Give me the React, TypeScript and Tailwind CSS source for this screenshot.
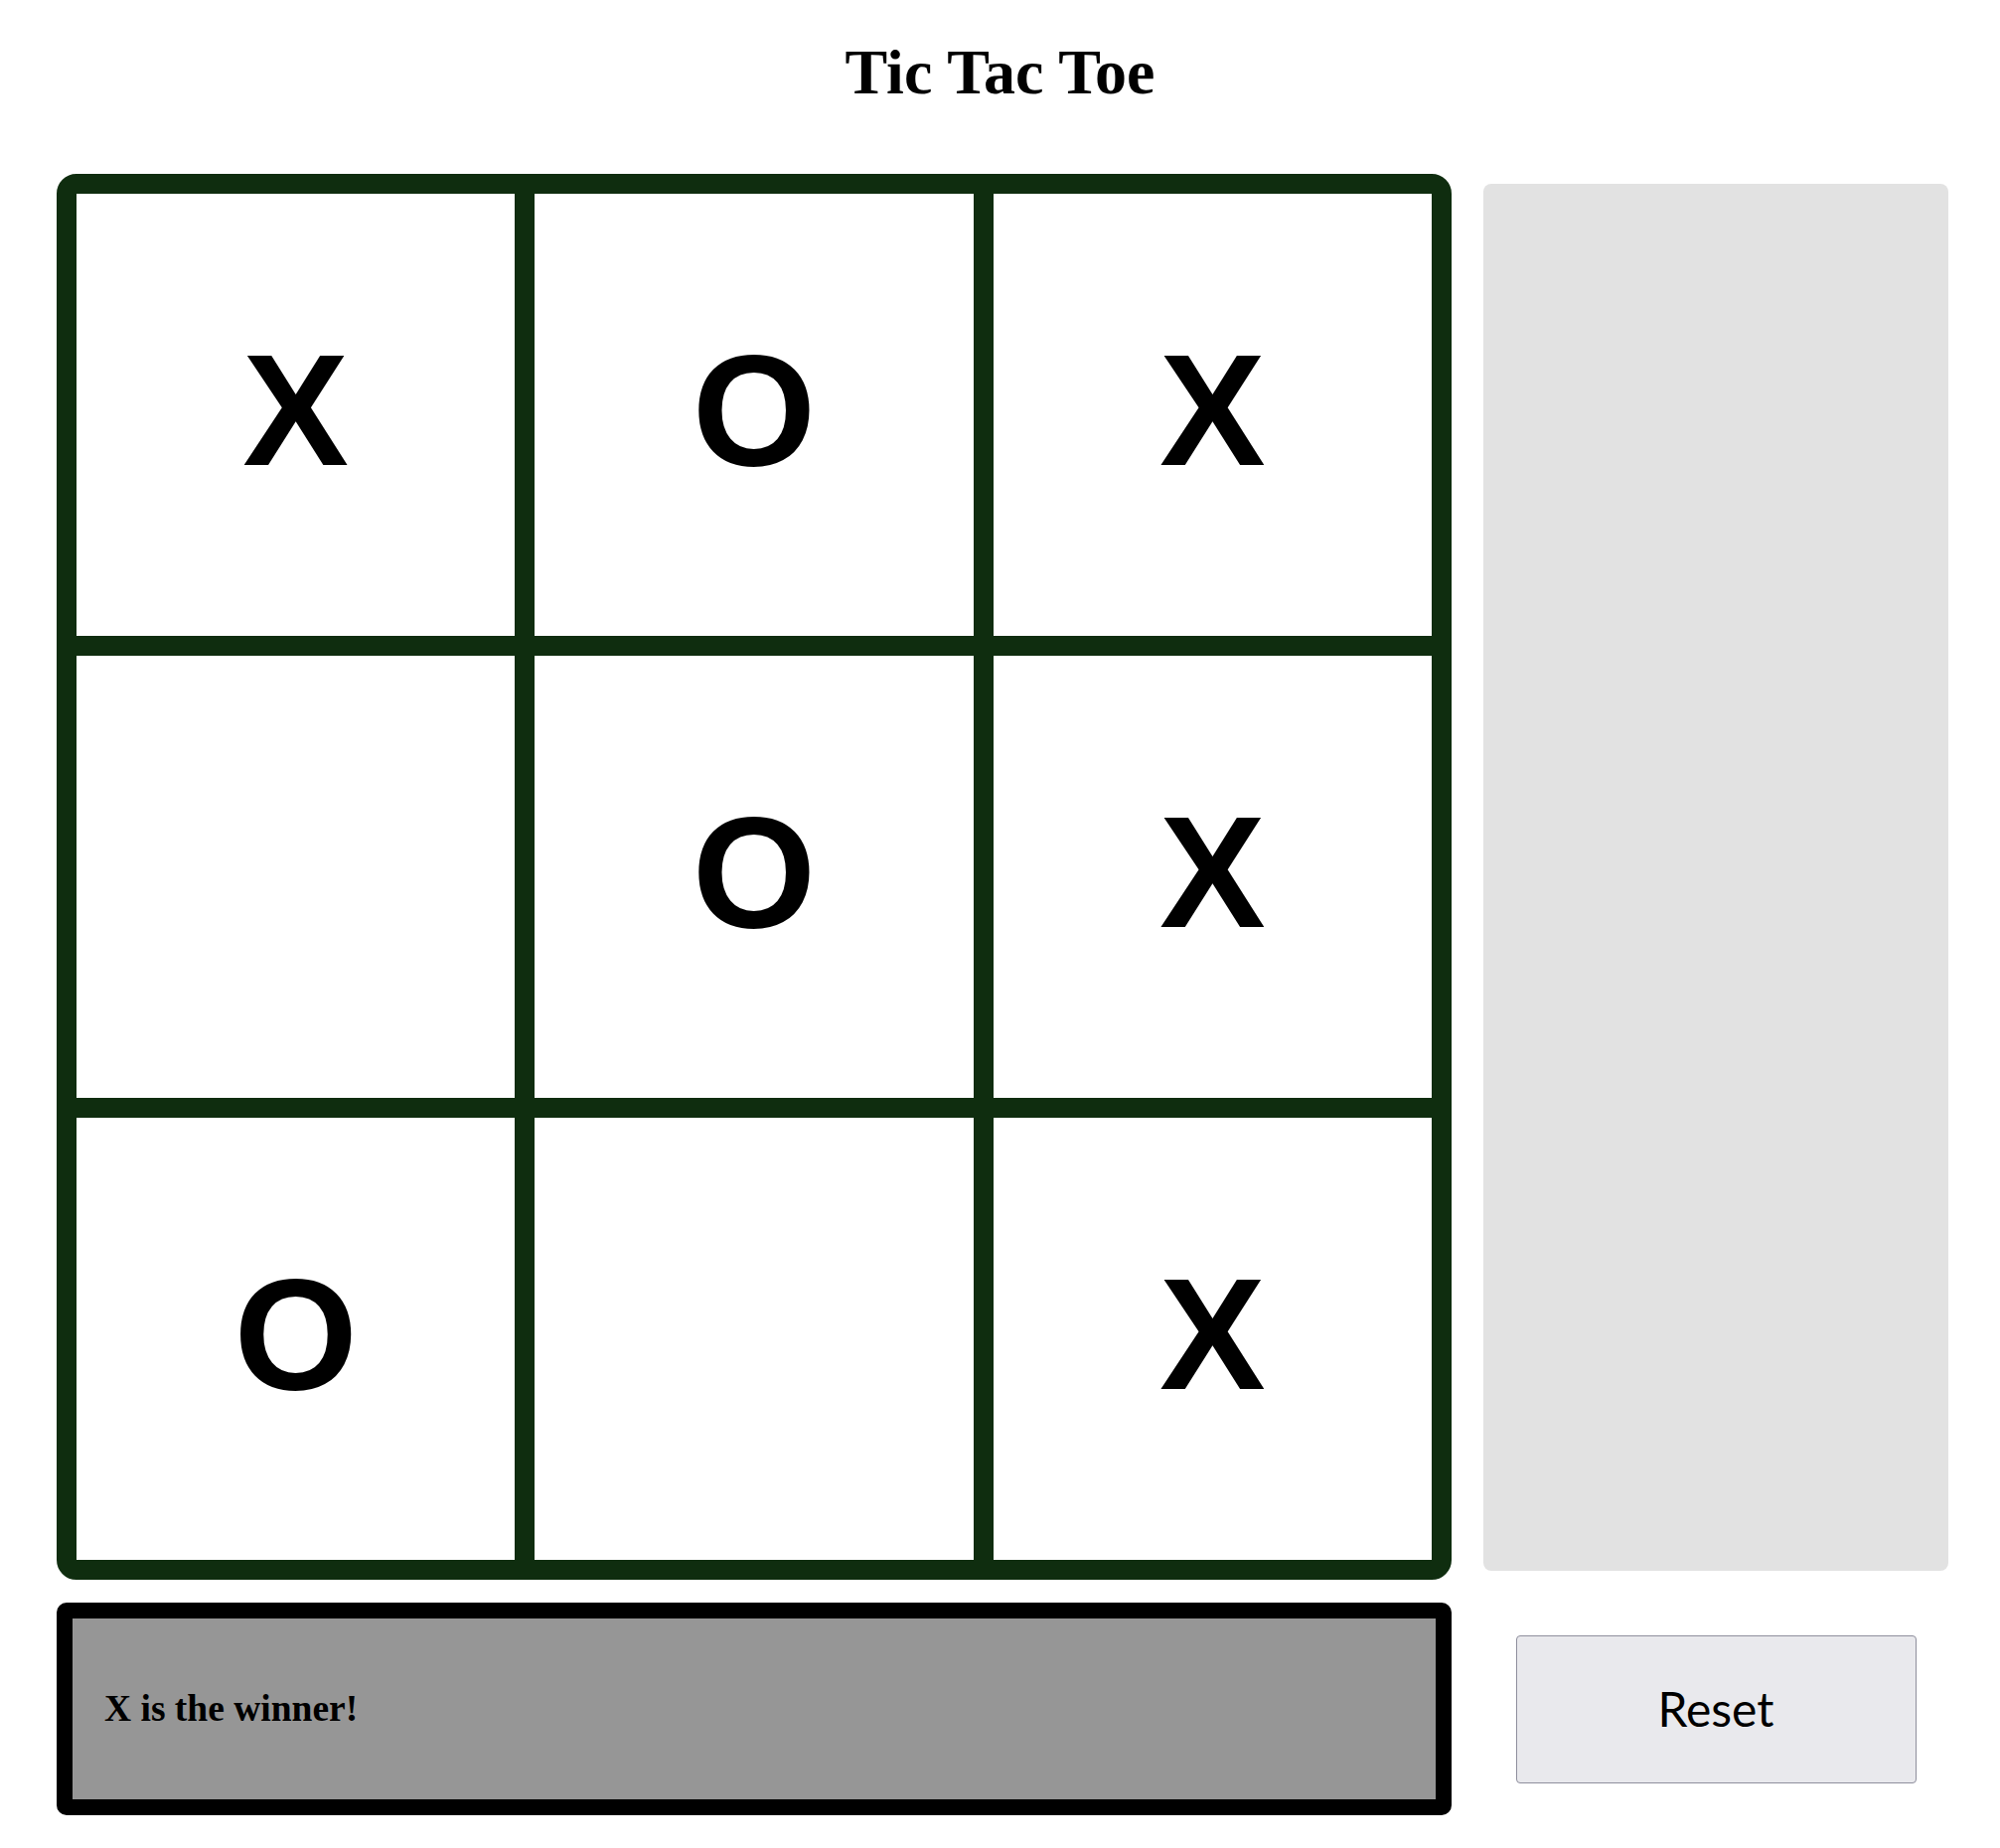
import { useState } from "react";

type Mark = "X" | "O" | null;

const initialBoard: Mark[] = ["X", "O", "X", null, "O", "X", "O", null, "X"];

function Cell({ value }: { value: Mark }) {
	return (
		<div className="h-[445px] bg-white flex items-center justify-center pb-[9px]">
			<span className="font-['Liberation_Sans',Arial,sans-serif] font-bold text-[160px] leading-none text-black select-none">
				{value}
			</span>
		</div>
	);
}

export default function App() {
	const [board, setBoard] = useState<Mark[]>(initialBoard);

	return (
		<div className="min-h-screen bg-white">
			<h1 className="mt-0 pt-[36px] mb-[65px] text-center text-[64px] leading-[74px] font-bold text-black font-['Liberation_Serif','Times_New_Roman',serif]">
				Tic Tac Toe
			</h1>

			<div className="pl-[57px]">
				<div className="flex items-start gap-[32px]">
					<div className="w-[1404px] h-[1415px] rounded-[20px] border-[20px] border-[#0f2d0f] bg-[#0f2d0f] grid grid-cols-3 gap-[20px]">
						{board.map((v, i) => (
							<Cell key={i} value={v} />
						))}
					</div>
					<div className="w-[468px] h-[1396px] mt-[10px] rounded-[8px] bg-[#e2e2e2]" />
				</div>

				<div className="flex items-center gap-[32px] mt-[23px]">
					<div className="w-[1404px] h-[214px] rounded-[10px] border-[16px] border-black bg-[#969696] flex items-center pl-[32px]">
						<span className="font-['Liberation_Serif','Times_New_Roman',serif] font-bold text-[37.5px] text-black">
							X is the winner!
						</span>
					</div>
					<div className="w-[468px] flex items-center justify-center">
						<button
							type="button"
							onClick={() => setBoard(Array(9).fill(null))}
							className="w-[403px] h-[149px] rounded-[4px] border border-[#8f8f9d] bg-[#e9e9ed] font-['Lato',sans-serif] text-[48px] text-black"
						>
							Reset
						</button>
					</div>
				</div>
			</div>
		</div>
	);
}
